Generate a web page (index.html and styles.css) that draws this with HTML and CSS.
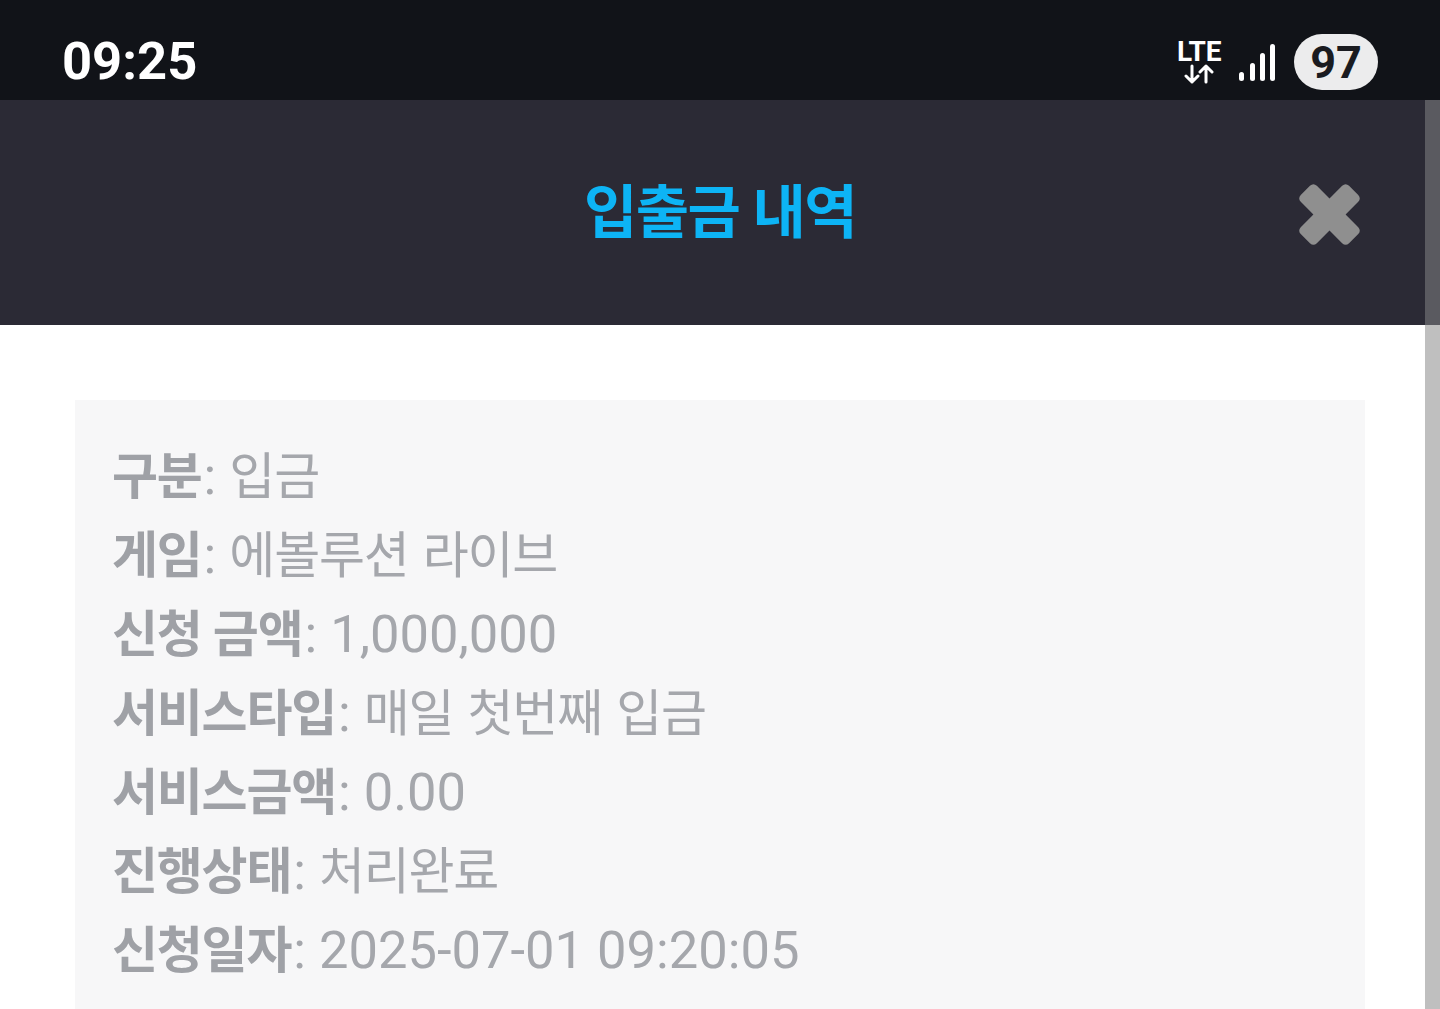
FILE: index.html
```html
<!DOCTYPE html>
<html lang="ko">
<head>
<meta charset="utf-8">
<title>입출금 내역</title>
<link rel="stylesheet" href="styles.css">
</head>
<body>
<div class="shell">
  <main class="page">
    <header class="status">
      <span class="time">09:25</span>
      <div class="status-icons">
        <div class="lte">
          <span class="lte-text">LTE</span>
          <svg class="arrows" width="32" height="20" viewBox="0 0 32 20" fill="none" stroke="#fff" stroke-width="3" stroke-linecap="round" stroke-linejoin="round"><path d="M9 2v16M3 12l6 6 6-6M23 18V2M17 8l6-6 6 6"/></svg>
        </div>
        <svg class="signal" width="38" height="40" viewBox="0 0 38 40" fill="#fff"><rect x="1" y="30" width="5" height="9" rx="2.500"/><rect x="12" y="21" width="5" height="18" rx="2.500"/><rect x="22" y="11" width="5" height="28" rx="2.500"/><rect x="32" y="2" width="5" height="37" rx="2.500"/></svg>
        <span class="battery">97</span>
      </div>
    </header>
    <div class="titlebar">
      <h1 class="title">입출금 내역</h1>
      <svg class="close" width="69" height="69" viewBox="0 0 60 60"><path fill="#8f8f8f" d="M5 13 13 5a4.500 4.500 0 0 1 6 0L30 16 41 5a4.500 4.500 0 0 1 6 0l8 8a4.500 4.500 0 0 1 0 6L44 30l11 11a4.500 4.500 0 0 1 0 6l-8 8a4.500 4.500 0 0 1-6 0L30 44 19 55a4.500 4.500 0 0 1-6 0l-8-8a4.500 4.500 0 0 1 0-6l11-11L5 19a4.500 4.500 0 0 1 0-6z"/></svg>
    </div>
    <section class="content">
      <div class="panel">
        <p class="row"><b class="label">구분</b><span class="colon">:</span> <span class="ko">입금</span></p>
        <p class="row"><b class="label">게임</b><span class="colon">:</span> <span class="ko">에볼루션 라이브</span></p>
        <p class="row"><b class="label">신청 금액</b><span class="colon">:</span> 1,000,000</p>
        <p class="row"><b class="label">서비스타입</b><span class="colon">:</span> <span class="ko">매일 첫번째 입금</span></p>
        <p class="row"><b class="label">서비스금액</b><span class="colon">:</span> 0.00</p>
        <p class="row"><b class="label">진행상태</b><span class="colon">:</span> <span class="ko">처리완료</span></p>
        <p class="row"><b class="label">신청일자</b><span class="colon">:</span> 2025-07-01 09:20:05</p>
      </div>
    </section>
  </main>
  <div class="scrollbar"><div class="thumb"></div></div>
</div>
</body>
</html>
```
FILE: styles.css
```css
* { box-sizing: border-box; }
html, body { margin: 0; height: 100%; overflow: hidden; background: #fff; }
body { font-family: Roboto, "Noto Sans CJK KR", sans-serif; }
.shell { display: flex; height: 1009px; position: relative; }
.page { width: 1440px; flex: none; }
.status { height: 100px; background: #111318; display: flex; align-items: center; justify-content: space-between; padding: 24px 62px 0 62px; }
.time { color: #fff; font-size: 52.500px; font-weight: 700; font-family: Roboto, sans-serif; line-height: 1; position: relative; top: -1px; }
.status-icons { display: flex; align-items: center; }
.lte { display: flex; flex-direction: column; align-items: center; width: 44px; margin-right: 17px; }
.lte-text { color: #fff; font-size: 28px; font-weight: 700; line-height: 24px; letter-spacing: -0.300px; font-family: Roboto, sans-serif; }
.arrows { display: block; }
.signal { margin-right: 18px; }
.battery { width: 84px; height: 56px; border-radius: 28px; background: #ececed; color: #1a1b20; font-size: 45px; font-weight: 700; font-family: Roboto, sans-serif; display: flex; align-items: center; justify-content: center; }
.titlebar { height: 225px; background: #2b2a35; position: relative; display: flex; align-items: center; justify-content: center; }
.title { margin: 0; color: #0db4f5; font-size: 58px; font-weight: 700; letter-spacing: -1.500px; line-height: 1; }
.close { position: absolute; left: 1295px; top: 80px; }
.content { padding: 75px 75px 0; height: 684px; overflow: hidden; }
.panel { background: #f7f7f8; width: 1290px; height: 700px; padding: 37px 37px; color: #a5a7ac; font-size: 52.500px; }
.row { margin: 0; height: 79px; line-height: 79px; white-space: nowrap; }
.label { font-weight: 700; font-size: 50px; letter-spacing: -1.200px; color: #9fa1a6; }
.colon { margin-left: 2px; }
.ko { font-size: 50px; letter-spacing: -1.200px; word-spacing: 3px; }
.scrollbar { position: absolute; left: 1425px; top: 100px; width: 15px; height: 909px; background: #bfbfbf; }
.thumb { height: 225px; background: #5a5a60; }
```
